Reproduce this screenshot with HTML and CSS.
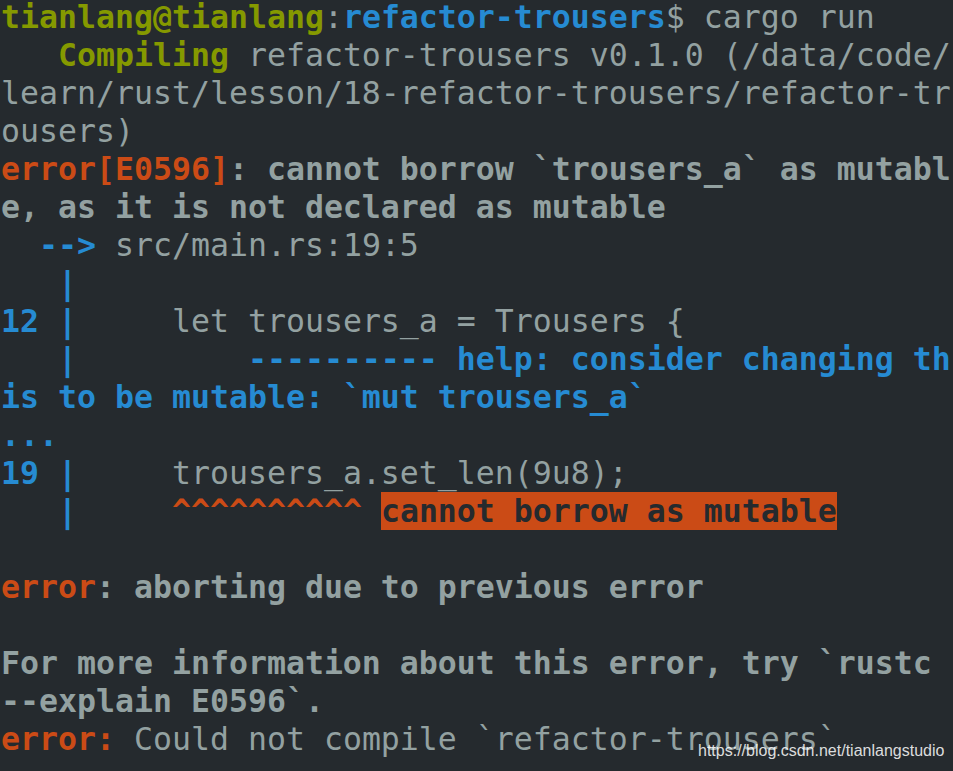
FILE: index.html
```html
<!DOCTYPE html>
<html>
<head>
<meta charset="utf-8">
<link rel="stylesheet" href="styles.css">
</head>
<body>
<div class="term">
<div class="ln"><span class="g b">tianlang@tianlang</span>:<span class="bl b">refactor-trousers</span>$ cargo run</div>
<div class="ln">   <span class="g b">Compiling</span> refactor-trousers v0.1.0 (/data/code/</div>
<div class="ln">learn/rust/lesson/18-refactor-trousers/refactor-tr</div>
<div class="ln">ousers)</div>
<div class="ln b"><span class="o">error[E0596]</span>: cannot borrow `trousers_a` as mutabl</div>
<div class="ln b">e, as it is not declared as mutable</div>
<div class="ln">  <span class="bl b">--&gt;</span> src/main.rs:19:5</div>
<div class="ln bl b">   |</div>
<div class="ln"><span class="bl b">12 |</span>     let trousers_a = Trousers {</div>
<div class="ln bl b">   |         ---------- help: consider changing th</div>
<div class="ln bl b">is to be mutable: `mut trousers_a`</div>
<div class="ln bl b">...</div>
<div class="ln"><span class="bl b">19 |</span>     trousers_a.set_len(9u8);</div>
<div class="ln"><span class="bl b">   |</span>     <span class="o b">^^^^^^^^^^</span> <span class="hl">cannot borrow as mutable</span></div>
<div class="ln"> </div>
<div class="ln b"><span class="o">error</span>: aborting due to previous error</div>
<div class="ln"> </div>
<div class="ln b">For more information about this error, try `rustc</div>
<div class="ln b">--explain E0596`.</div>
<div class="ln"><span class="o b">error:</span> Could not compile `refactor-trousers`</div>
</div>
<div class="wm">https://blog.csdn.net/tianlangstudio</div>
</body>
</html>
```
FILE: styles.css
```css
html, body {
  margin: 0;
  padding: 0;
  background: #252a2e;
  height: 100%;
  overflow: hidden;
}
.term {
  margin-top: -2px;
  padding-left: 1px;
  font-family: "DejaVu Sans Mono", "Liberation Mono", monospace;
  font-size: 31.56px;
  line-height: 38px;
  color: #93a1a1;
}
.ln {
  height: 38px;
  white-space: pre;
}
.b { font-weight: bold; }
.g { color: #859900; }
.bl { color: #268bd2; }
.o { color: #cb4b16; }
.hl {
  display: inline-block;
  background: #cb4b16;
  color: #252a2e;
  font-weight: bold;
  line-height: 38px;
  vertical-align: top;
}
.wm {
  position: absolute;
  left: 698px;
  top: 742px;
  font-family: "Liberation Sans", Arial, sans-serif;
  font-size: 16px;
  color: rgba(255, 255, 255, 0.85);
}
```
